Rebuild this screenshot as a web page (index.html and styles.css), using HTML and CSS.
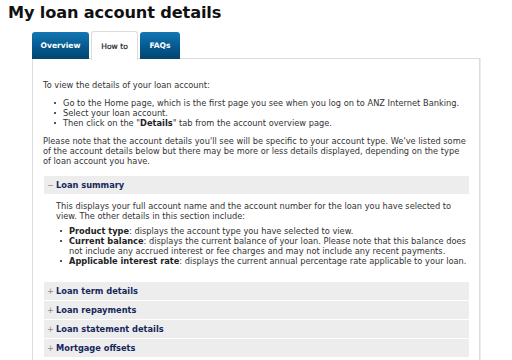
FILE: index.html
```html
<!DOCTYPE html>
<html>
<head>
<meta charset="utf-8">
<link rel="stylesheet" href="styles.css">
</head>
<body>
<h1 class="title">My loan account details</h1>
<div class="wrap">
  <ul class="tabs">
    <li class="tab">Overview</li>
    <li class="tab active">How to</li>
    <li class="tab">FAQs</li>
  </ul>
  <div class="panel">
    <p class="intro">To view the details of your loan account:</p>
    <ul class="list">
      <li>Go to the Home page, which is the first page you see when you log on to ANZ Internet Banking.</li>
      <li>Select your loan account.</li>
      <li>Then click on the "<b>Details</b>" tab from the account overview page.</li>
    </ul>
    <p class="note">Please note that the account details you'll see will be specific to your account type. We've listed some of the account details below but there may be more or less details displayed, depending on the type of loan account you have.</p>
    <div class="acc">
      <div class="acc-head"><span class="sign">&minus;</span>Loan summary</div>
      <div class="acc-body">
        <p>This displays your full account name and the account number for the loan you have selected to view. The other details in this section include:</p>
        <ul class="list inner">
          <li><b>Product type</b>: displays the account type you have selected to view.</li>
          <li><b>Current balance</b>: displays the current balance of your loan. Please note that this balance does not include any accrued interest or fee charges and may not include any recent payments.</li>
          <li><b>Applicable interest rate</b>: displays the current annual percentage rate applicable to your loan.</li>
        </ul>
      </div>
      <div class="acc-head"><span class="sign">+</span>Loan term details</div>
      <div class="acc-head"><span class="sign">+</span>Loan repayments</div>
      <div class="acc-head"><span class="sign">+</span>Loan statement details</div>
      <div class="acc-head"><span class="sign">+</span>Mortgage offsets</div>
    </div>
  </div>
</div>
</body>
</html>
```

FILE: styles.css
```css
html, body {
  margin: 0;
  padding: 0;
  background: #fff;
  overflow: hidden;
}
body {
  padding: 0 8px;
  font-family: "DejaVu Sans", Verdana, sans-serif;
  color: #333;
}
.title {
  margin: 0;
  padding-top: 3px;
  font-size: 16.2px;
  line-height: 20px;
  font-weight: bold;
  color: #111;
  letter-spacing: -0.15px;
}
.wrap {
  margin-left: 24px;
  width: 448px;
  padding-top: 8px;
}
.tabs {
  list-style: none;
  margin: 0;
  padding: 0;
  display: flex;
  gap: 2px;
  position: relative;
  z-index: 1;
  height: 28px;
}
.tab {
  height: 27px;
  margin-top: 1px;
  box-sizing: border-box;
  display: flex;
  align-items: center;
  justify-content: center;
  white-space: nowrap;
  font-size: 7.6px;
  font-weight: bold;
  color: #fff;
  background: linear-gradient(#1477b3, #05598f 55%, #00466f);
  border-radius: 3px 3px 0 0;
  padding: 0;
}
.tab:nth-child(1) { width: 57px; }
.tab:nth-child(2) { width: 47px; }
.tab:nth-child(3) { width: 40px; }
.tab.active {
  background: #fff;
  color: #222;
  border: 1px solid #dcdcdc;
  border-bottom: none;
  height: 29px;
  margin-top: 0;
  font-weight: normal;
  -webkit-text-stroke: 0.2px #222;
}
.panel {
  border: 1px solid #dcdcdc;
  box-shadow: 1px 0 0 #ececec;
  padding: 21px 10px 40px 10px;
  font-size: 8.25px;
  line-height: 10px;
  margin-top: -1px;
}
.panel p { margin: 0; }
.intro { margin-bottom: 8px !important; }
.list {
  margin: 0 0 8px 0;
  padding: 0 0 0 20px;
  list-style: none;
}
.list li { position: relative; }
.list li::before {
  content: "";
  position: absolute;
  left: -9px;
  top: 4px;
  width: 2px;
  height: 2px;
  background: #555;
}
.list b { color: #222; }
.note { margin-bottom: 10px !important; }
.acc { margin-left: 1px; }
.acc-head {
  background: #ededed;
  height: 18px;
  line-height: 18px;
  margin-bottom: 1px;
  font-weight: bold;
  color: #15275a;
  padding-left: 3px;
}
.sign {
  display: inline-block;
  width: 9px;
  font-weight: normal;
  color: #888;
}
.acc-body {
  padding: 7px 2px 16px 12px;
  margin-top: -1px;
}
.acc-body p { margin-bottom: 5px; }
.list.inner { padding-left: 13px; margin: 0; }
```
